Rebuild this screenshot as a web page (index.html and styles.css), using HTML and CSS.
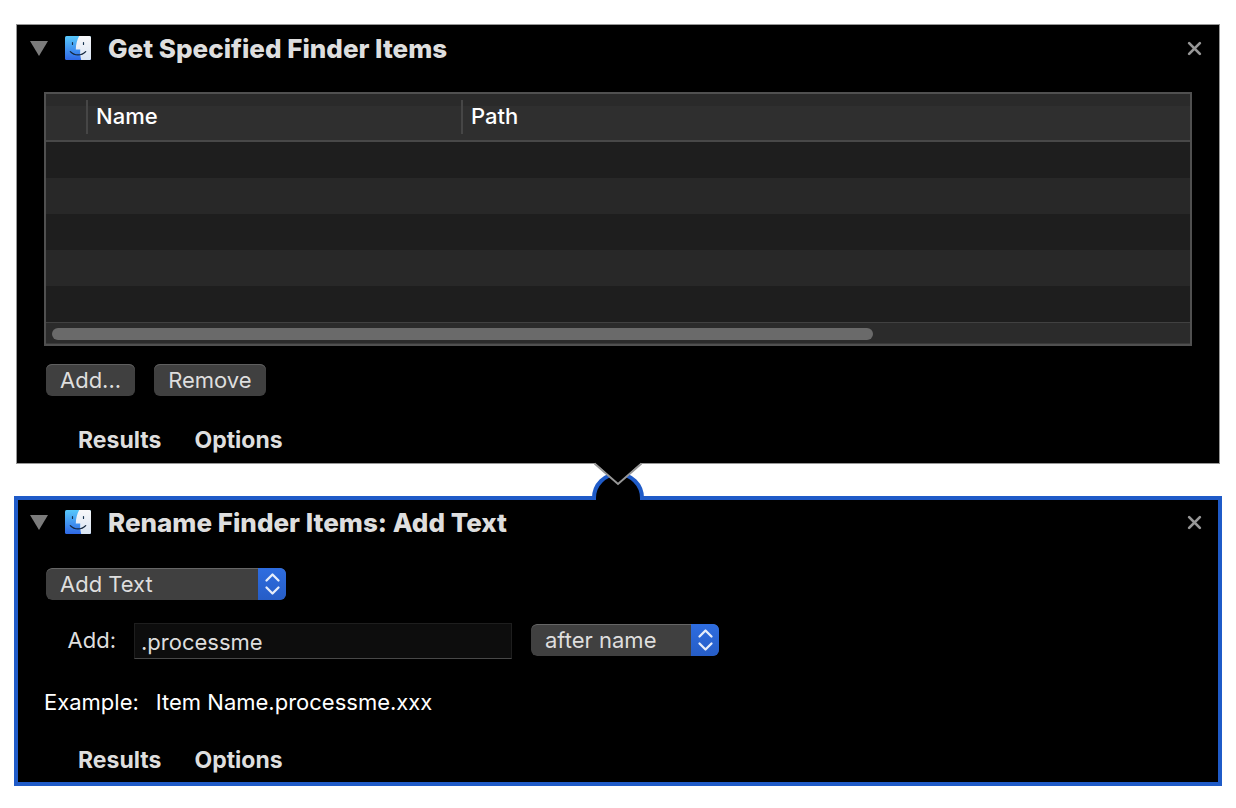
FILE: index.html
```html
<!DOCTYPE html>
<html lang="en">
<head>
<meta charset="utf-8">
<title>Automator Workflow</title>
<link rel="stylesheet" href="styles.css">
</head>
<body>
<svg class="defs" aria-hidden="true">
  <defs>
    <linearGradient id="face-blue" x1="0" y1="0" x2="0" y2="1"><stop offset="0" stop-color="#58c8fb"/><stop offset="1" stop-color="#2f68e6"/></linearGradient>
    <linearGradient id="face-white" x1="0" y1="0" x2="0" y2="1"><stop offset="0" stop-color="#f8f8fa"/><stop offset="1" stop-color="#d9e4f3"/></linearGradient>
    <clipPath id="face-clip"><rect width="26" height="24" rx="1.5"/></clipPath>
    <symbol id="finder" viewBox="0 0 26 24">
      <g clip-path="url(#face-clip)">
        <rect width="26" height="24" fill="url(#face-blue)"/>
        <path d="M14.2 0C12 4 11 8 10.8 13.4h4.400c-.2 3.600.2 7.400 1 10.600H26V0z" fill="url(#face-white)"/>
        <path d="M7.500 6.500v2M18.500 6.500v2" stroke="#17334f" stroke-width="1.200" stroke-linecap="round"/>
        <path d="M5.300 15.600c4.200 4.400 11.200 4.400 15.400 0" fill="none" stroke="#16283e" stroke-width="1.300" stroke-linecap="round"/>
      </g>
    </symbol>
    <symbol id="triangle" viewBox="0 0 18 15"><path d="M0 0h18L9 15z" fill="#7b7b7b"/></symbol>
    <symbol id="cross" viewBox="0 0 14 14"><path d="M2 2l10 10M12 2L2 12" stroke="#979797" stroke-width="2.500" stroke-linecap="round"/></symbol>
    <symbol id="chevrons" viewBox="0 0 28 32"><path d="M8.500 12.500l6-6 6 6M8.500 19.500l6 6 6-6" fill="none" stroke="#e6edfa" stroke-width="2.300" stroke-linecap="round" stroke-linejoin="round"/></symbol>
  </defs>
</svg>
<main class="workflow">
  <section class="action">
    <header class="action-header">
      <button class="icon-button" type="button" aria-label="Collapse"><svg class="triangle"><use href="#triangle"/></svg></button>
      <svg class="finder" aria-hidden="true"><use href="#finder"/></svg>
      <h2 class="title">Get Specified Finder Items</h2>
      <button class="icon-button close" type="button" aria-label="Remove action"><svg class="cross"><use href="#cross"/></svg></button>
    </header>
    <div class="content">
      <div class="list">
        <table class="items">
          <thead>
            <tr><th class="col-icon" aria-label="Icon"></th><th class="col-name"><span class="heading">Name</span></th><th><span class="heading">Path</span></th></tr>
          </thead>
          <tbody>
            <tr><td></td><td></td><td></td></tr>
            <tr><td></td><td></td><td></td></tr>
            <tr><td></td><td></td><td></td></tr>
            <tr><td></td><td></td><td></td></tr>
            <tr><td></td><td></td><td></td></tr>
          </tbody>
        </table>
        <div class="scrollbar"><div class="thumb"></div></div>
      </div>
      <div class="buttons">
        <button class="push" type="button">Add...</button>
        <button class="push" type="button">Remove</button>
      </div>
    </div>
    <footer class="action-footer">
      <button class="tab" type="button">Results</button>
      <button class="tab" type="button">Options</button>
    </footer>
  </section>
  <div class="connector" aria-hidden="true">
    <svg class="joint" viewBox="0 0 56 40">
      <path d="M4 40V36a24 24 0 0 1 48 0v4z" fill="#000"/>
      <path d="M4 38v-2a24 24 0 0 1 48 0v2" fill="none" stroke="#1f5bc8" stroke-width="4"/>
      <path d="M4 0L28 22 52 0z" fill="#000"/>
      <path d="M4.500 1.500L28 22 51.500 1.500" fill="none" stroke="#979797" stroke-width="2"/>
    </svg>
  </div>
  <section class="action selected">
    <header class="action-header">
      <button class="icon-button" type="button" aria-label="Collapse"><svg class="triangle"><use href="#triangle"/></svg></button>
      <svg class="finder" aria-hidden="true"><use href="#finder"/></svg>
      <h2 class="title">Rename Finder Items: Add Text</h2>
      <button class="icon-button close" type="button" aria-label="Remove action"><svg class="cross"><use href="#cross"/></svg></button>
    </header>
    <div class="content form">
      <div class="popup popup-mode">
        <select class="popup-select" aria-label="Rename mode"><option>Add Text</option></select>
        <svg class="popup-arrows" aria-hidden="true"><use href="#chevrons"/></svg>
      </div>
      <div class="field-row">
        <label class="field-label" for="text">Add:</label>
        <input class="field" id="text" type="text" value=".processme">
        <div class="popup popup-place">
          <select class="popup-select" aria-label="Position"><option>after name</option></select>
          <svg class="popup-arrows" aria-hidden="true"><use href="#chevrons"/></svg>
        </div>
      </div>
      <p class="example"><span>Example:</span><span>Item Name.processme.xxx</span></p>
    </div>
    <footer class="action-footer">
      <button class="tab" type="button">Results</button>
      <button class="tab" type="button">Options</button>
    </footer>
  </section>
</main>
</body>
</html>
```
FILE: styles.css
```css
* { box-sizing: border-box; }

body {
  margin: 0;
  background: #fff;
  color: #dedede;
  font-family: Inter, "Liberation Sans", sans-serif;
  font-size: 22px;
  line-height: 28px;
}

button, input, select { font: inherit; color: inherit; margin: 0; }
svg { display: block; }
.defs { position: absolute; width: 0; height: 0; }

.workflow { padding: 24px 14px; }

.action {
  margin: 0 2px;
  padding: 8px 13px 9px;
  background: #000;
  border: 1px solid #979797;
}
.selected {
  margin: 0;
  padding: 7px 12px 8px;
  border: 4px solid #1f5bc8;
}

.action-header { display: flex; align-items: center; height: 32px; }
.icon-button { padding: 0 0 2px; border: 0; background: none; }
.triangle { width: 18px; height: 15px; }
.finder { width: 26px; height: 24px; margin: 0 17px 2px; }
.title {
  margin: 0;
  font-size: 26px;
  font-weight: 800;
  line-height: 32px;
}
.close { margin-left: auto; padding-right: 4px; }
.cross { width: 15px; height: 15px; }

.content { padding: 27px 14px 0; }

.list { border: 2px solid #505050; background: #2b2b2b; }
.items { width: 100%; border-collapse: separate; border-spacing: 0; table-layout: fixed; }
.items th {
  height: 48px;
  padding: 0;
  border-bottom: 2px solid #484848;
  background: linear-gradient(#2a2a2a 12px, #2f2f2f 12px);
  color: #fff;
  font-weight: 500;
  text-align: left;
}
.col-icon { width: 40px; }
.col-name { width: 375px; }
.heading {
  display: block;
  padding: 0 0 2px 8px;
  border-left: 2px solid #464646;
  line-height: 32px;
}
.items td { height: 36px; padding: 0; background: #1e1e1e; }
.items tr:nth-child(even) td { background: #282828; }

.scrollbar {
  height: 22px;
  padding: 5px 6px;
  border-top: 1px solid #414141;
  border-bottom: 1px solid #3a3a3a;
}
.thumb { width: 72.5%; height: 12px; border-radius: 6px; background: #6a6a6a; }

.buttons { display: flex; gap: 19px; padding: 18px 2px 0; }
.push {
  height: 32px;
  padding: 0 14px;
  border: 0;
  border-radius: 6px;
  background: #404040;
  box-shadow: inset 0 1px #5f5f5f;
  line-height: 32px;
}

.action-footer { display: flex; gap: 33px; padding: 30px 48px 0; }
.tab {
  padding: 0;
  border: 0;
  background: none;
  font-size: 23px;
  font-weight: 700;
}

.connector { position: relative; height: 32px; z-index: 1; }
.joint {
  position: absolute;
  top: -2px;
  left: 50%;
  width: 56px;
  height: 40px;
  margin-left: -28px;
}

.form { padding-top: 29px; }
.popup {
  position: relative;
  height: 32px;
  border-radius: 6px;
  overflow: hidden;
}
.popup-mode { width: 240px; margin-left: 2px; }
.popup-place { width: 188px; margin: 0 0 2px 19px; }
.popup-select {
  appearance: none;
  display: block;
  width: 100%;
  height: 32px;
  padding: 0 40px 0 14px;
  border: 0;
  border-radius: 6px;
  background: #404040;
  box-shadow: inset 0 1px #666;
  line-height: 32px;
}
.popup-arrows {
  position: absolute;
  top: 0;
  right: 0;
  width: 28px;
  height: 32px;
  background: linear-gradient(#2e6de0, #265dc6);
  pointer-events: none;
}

.field-row { display: flex; align-items: center; padding-top: 23px; }
.field-label { width: 90px; padding: 0 18px 2px 0; text-align: right; }
.field {
  width: 378px;
  height: 36px;
  padding: 2px 6px 0;
  border: 1px solid #1e1e1e;
  border-bottom-color: #484848;
  background: #0d0d0d;
}

.example { display: flex; gap: 17px; margin: 0; padding-top: 29px; color: #fff; }
```
